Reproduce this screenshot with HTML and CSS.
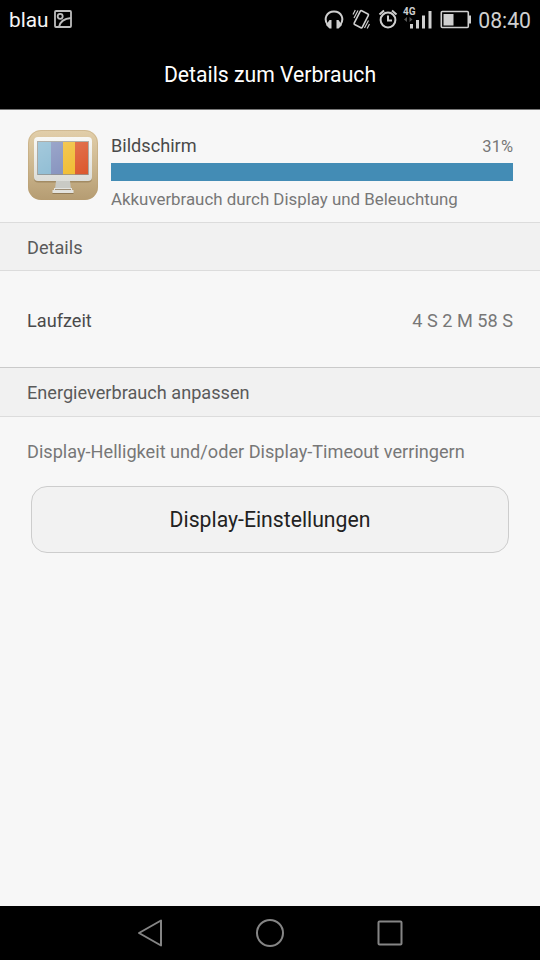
FILE: index.html
```html
<!DOCTYPE html>
<html lang="de">
	<head>
		<meta charset="utf-8">
		<title>Details zum Verbrauch</title>
		<meta name="viewport" content="width=device-width">
		<link rel="stylesheet" href="styles.css">
	</head>
	<body>

		<header class="cabecera">
			<div class="barra_estado">
				<span class="operador">blau</span>
				<svg class="icono_foto" width="18" height="18" viewBox="0 0 18 18">
					<rect x="1" y="1" width="16" height="16" rx="1"/>
					<circle cx="6.2" cy="6.3" r="2.500"/>
					<path d="M5 17C6 12 10 8.500 17 8"/>
				</svg>
				<svg class="iconos" width="148" height="36" viewBox="324 0 148 36">
					<!-- auriculares -->
					<path class="linea" d="M327.500 23.500C323.500 18 326.500 10.500 334 10.500S344.500 18 340.500 23.500"/>
					<path class="relleno" d="M329.500 19h2v8.500h-2l-3.500-3.500zM338.500 19h-2v8.500h2l3.500-3.500z"/>
					<!-- vibracion -->
					<rect class="linea fina" x="356.800" y="10.500" width="9" height="15.500" rx="1" transform="rotate(27 361.300 18.200)"/>
					<path class="linea trazo" d="M358 9.500l-4 7.500M355.300 9l-2.300 4.500M368.500 19.500l-4 7.500M369.500 23l-2.300 4.500"/>
					<!-- alarma -->
					<circle class="linea" cx="388" cy="19" r="7.400"/>
					<path class="linea" d="M388 14.500V19.500h4M379.500 13.500l4.500-4M396.500 13.500l-4.500-4"/>
					<!-- senal -->
					<text class="red" x="403" y="14">4G</text>
					<path class="flechas" d="M404 18.500l3-2.500v5zM412.500 18.500l-3-2.500v5z"/>
					<path class="relleno" d="M410 23h3v4.500h-3zM416 19h3v8.500h-3zM422 14.500h3v13h-3zM428.500 10h3v17.500h-3z"/>
					<!-- bateria -->
					<rect class="linea fina" x="441.300" y="10.500" width="27" height="16" rx="1"/>
					<path class="relleno" d="M443.500 13h10v11.500h-10zM469 14.500h2v8h-2z"/>
				</svg>
				<span class="hora">08:40</span>
			</div>
			<h1>Details zum Verbrauch</h1>
		</header>

		<main class="contenido">
			<section class="consumo">
				<svg class="icono_app" width="72" height="72" viewBox="0 0 72 72">
					<defs>
						<linearGradient id="fondo" x1="0" y1="0" x2="0" y2="1">
							<stop offset="0" stop-color="#e2cfaa"/>
							<stop offset=".5" stop-color="#cdb78f"/>
							<stop offset="1" stop-color="#b59c72"/>
						</linearGradient>
						<linearGradient id="marco" x1="0" y1="0" x2="0" y2="1">
							<stop offset="0" stop-color="#f8f8f5"/>
							<stop offset="1" stop-color="#dcddd9"/>
						</linearGradient>
						<linearGradient id="brillo" x1="0" y1="0" x2="1" y2="1">
							<stop offset="0" stop-color="#fff" stop-opacity=".25"/>
							<stop offset="1" stop-color="#fff" stop-opacity="0"/>
						</linearGradient>
					</defs>
					<rect x="1" y="1" width="70" height="70" rx="13" fill="url(#fondo)"/>
					<rect x="1.500" y="1.500" width="69" height="69" rx="12.500" fill="none" stroke="#b89e70" stroke-opacity=".4"/>
					<rect x="7" y="9.500" width="58" height="44" rx="4" fill="#8d7650" opacity=".6"/>
					<path d="M29 52h14l1 8H28z" fill="#c9cac5"/>
					<path d="M27 59h18v2h1.500v3h-21v-3H27z" fill="#e3e3df"/>
					<path d="M25.500 64.500h21M28 60.500h16" stroke="#806a48" stroke-opacity=".7"/>
					<rect x="7" y="8" width="58" height="44" rx="4" fill="url(#marco)"/>
					<rect x="11" y="13" width="13" height="32.500" fill="#86b7d0"/>
					<rect x="24" y="13" width="12" height="32.500" fill="#7f8dbb"/>
					<rect x="36" y="13" width="12" height="32.500" fill="#f0bb2d"/>
					<rect x="48" y="13" width="13" height="32.500" fill="#dc572c"/>
					<rect x="11" y="13" width="50" height="32.500" fill="url(#brillo)"/>
					<rect x="10.500" y="12.500" width="51" height="33" fill="none" stroke="#77736b" stroke-opacity=".55"/>
				</svg>
				<div class="datos">
					<div class="fila">
						<span class="nombre">Bildschirm</span>
						<span class="porcentaje">31%</span>
					</div>
					<div class="barra"></div>
					<p>Akkuverbrauch durch Display und Beleuchtung</p>
				</div>
			</section>

			<h2>Details</h2>
			<div class="tiempo">
				<span>Laufzeit</span>
				<span class="valor">4 S 2 M 58 S</span>
			</div>

			<h2 class="ajuste">Energieverbrauch anpassen</h2>
			<p class="consejo">Display-Helligkeit und/oder Display-Timeout verringern</p>
			<button class="boton">Display-Einstellungen</button>
		</main>

		<nav class="nav_inferior">
			<svg width="26" height="30" viewBox="0 0 26 30"><path d="M24 2.500v25L2 15z"/></svg>
			<svg width="30" height="30" viewBox="0 0 30 30"><circle cx="15" cy="15" r="13"/></svg>
			<svg width="26" height="30" viewBox="0 0 26 30"><rect x="1.500" y="3.500" width="23" height="23" rx="1"/></svg>
		</nav>

	</body>
</html>
```
FILE: styles.css
```css
* {
    margin: 0;
    padding: 0;
    box-sizing: border-box;
}

body {
    display: flex;
    flex-direction: column;
    height: 960px;
    font-family: Roboto, sans-serif;
    font-size: 18.15px;
    color: #4a4a4a;
    background-color: #f7f7f7;
}

/* cabecera */
.cabecera {
    height: 110px;
    background-color: #000;
    border-bottom: 1px solid #777;
}

.barra_estado {
    display: flex;
    align-items: center;
    height: 38px;
    padding: 0 9px 0 9px;
    color: #d0d0d0;
}

.operador {
    font-size: 20.8px;
    line-height: 36px;
    padding-top: 2px;
    color: #f5f5f5;
    margin-right: 5px;
}

.icono_foto {
    fill: none;
    stroke: #bdbdbd;
    stroke-width: 1.8;
}

.iconos {
    margin-left: auto;
    margin-right: 6px;
}

.linea {
    fill: none;
    stroke: #cfcfcf;
    stroke-width: 2;
}

.fina {
    stroke-width: 1.6;
}

.trazo {
    stroke-width: 1.2;
}

.relleno {
    fill: #cfcfcf;
}

.flechas {
    fill: #555;
}

.red {
    font-size: 10px;
    font-weight: bold;
    fill: #cfcfcf;
}

.hora {
    font-size: 21.2px;
    padding-top: 2px;
}

h1 {
    font-size: 21.2px;
    font-weight: normal;
    line-height: 74px;
    text-align: center;
    color: #fff;
}

/* contenido */
.contenido {
    flex: 1;
}

.consumo {
    display: flex;
    height: 112px;
    padding: 19px 27px 0 27px;
}

.icono_app {
    margin-right: 12px;
}

.datos {
    flex: 1;
}

.fila {
    display: flex;
    justify-content: space-between;
    align-items: center;
    height: 34px;
}

.nombre {
    padding-bottom: 2px;
}

.porcentaje {
    font-size: 16.5px;
    color: #777;
}

.barra {
    height: 18px;
    background-color: #438cb5;
}

.datos p {
    font-size: 16.88px;
    line-height: 37px;
    color: #777;
}

h2 {
    height: 49px;
    padding-left: 27px;
    font-size: 18.15px;
    font-weight: normal;
    line-height: 49px;
    color: #5a5a5a;
    background-color: #f1f1f1;
    border-top: 1px solid #dcdcdc;
    border-bottom: 1px solid #dcdcdc;
}

.tiempo {
    display: flex;
    justify-content: space-between;
    align-items: center;
    height: 96px;
    padding: 2px 27px 0 27px;
}

.valor {
    color: #777;
}

.ajuste {
    height: 50px;
    border-top-color: #cacaca;
}

.consejo {
    padding: 0 27px;
    line-height: 69px;
    color: #777;
}

.boton {
    display: block;
    width: 478px;
    height: 67px;
    margin: 0 auto;
    font-family: Roboto, sans-serif;
    font-size: 21.2px;
    color: #222;
    background-color: #f2f2f2;
    border: 1px solid #cdcdcd;
    border-radius: 16px;
}

/* navegacion inferior */
.nav_inferior {
    display: flex;
    justify-content: center;
    align-items: center;
    gap: 92px;
    height: 54px;
    background-color: #000;
}

.nav_inferior svg {
    fill: none;
    stroke: #858585;
    stroke-width: 2;
    stroke-linejoin: round;
}
```
